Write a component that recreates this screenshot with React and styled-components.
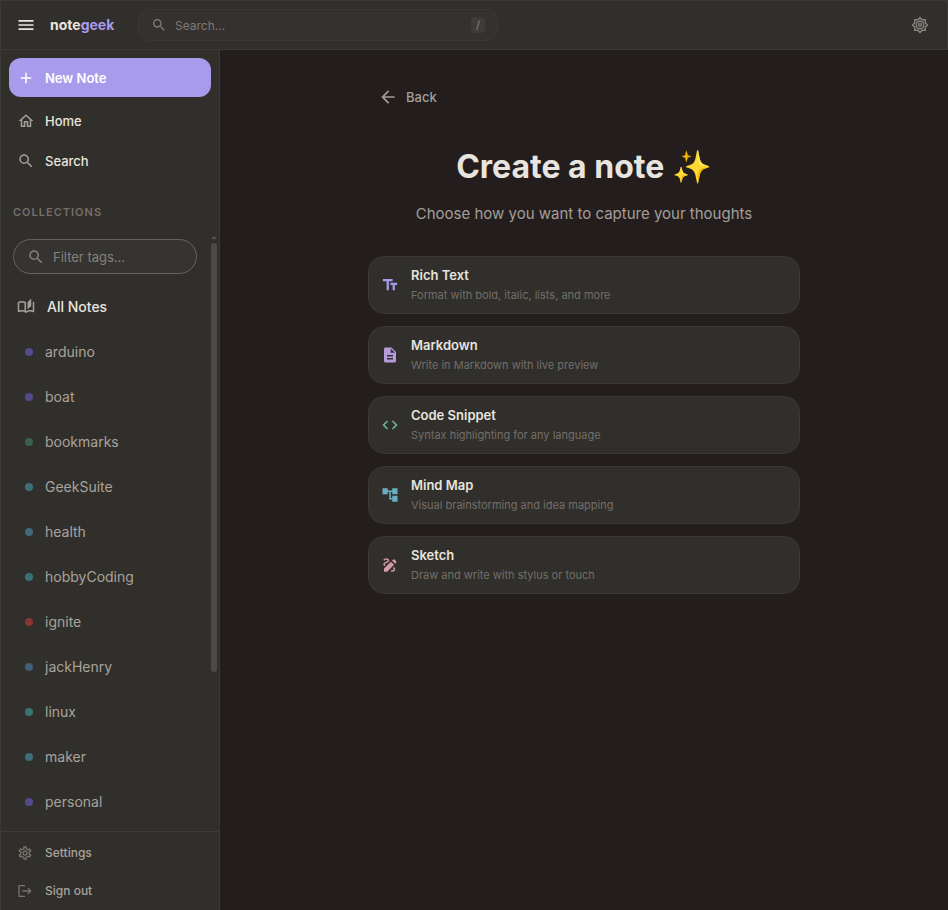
import styled, { createGlobalStyle } from "styled-components";
import {
    MdAccountTree,
    MdAdd,
    MdArrowBack,
    MdCode,
    MdDescription,
    MdDraw,
    MdLogout,
    MdMenu,
    MdOutlineAutoStories,
    MdOutlineHome,
    MdOutlineSettings,
    MdSearch,
    MdTextFields,
} from "react-icons/md";

const TAGS = [
    { name: "arduino", color: "#54498a" },
    { name: "boat", color: "#54498a" },
    { name: "bookmarks", color: "#3b5f4e" },
    { name: "GeekSuite", color: "#3f6e7c" },
    { name: "health", color: "#41697a" },
    { name: "hobbyCoding", color: "#387175" },
    { name: "ignite", color: "#87372f" },
    { name: "jackHenry", color: "#415f77" },
    { name: "linux", color: "#387571" },
    { name: "maker", color: "#3f6b7a" },
    { name: "personal", color: "#54498a" },
];

const NOTE_TYPES = [
    { title: "Rich Text", desc: "Format with bold, italic, lists, and more", icon: MdTextFields, color: "#a99bec" },
    { title: "Markdown", desc: "Write in Markdown with live preview", icon: MdDescription, color: "#b79bdb" },
    { title: "Code Snippet", desc: "Syntax highlighting for any language", icon: MdCode, color: "#74bd9d" },
    { title: "Mind Map", desc: "Visual brainstorming and idea mapping", icon: MdAccountTree, color: "#68afc1" },
    { title: "Sketch", desc: "Draw and write with stylus or touch", icon: MdDraw, color: "#d49ba7" },
];

const ThemeIcon = () => (
    <svg width="18" height="18" viewBox="0 0 24 24" fill="none" stroke="currentColor" strokeWidth="1.8" aria-hidden="true">
        <path d="M19 9.1V5h-4.1L12 2.1 9.1 5H5v4.1L2.1 12 5 14.9V19h4.1l2.9 2.9 2.9-2.9H19v-4.1l2.9-2.9z" />
        <circle cx="12" cy="12" r="5" />
        <circle cx="12" cy="12" r="1.8" />
    </svg>
);

const App = () => {
    return (
        <Shell>
            <GlobalStyle />
            <TopBar>
                <IconButton type="button" aria-label="Toggle menu">
                    <MdMenu size={20} />
                </IconButton>
                <Brand href="#">
                    note<span>geek</span>
                </Brand>
                <SearchBox>
                    <MdSearch size={16} />
                    <SearchInput type="text" placeholder="Search..." aria-label="Search notes" />
                    <Key>/</Key>
                </SearchBox>
                <ThemeButton type="button" aria-label="Change theme">
                    <ThemeIcon />
                </ThemeButton>
            </TopBar>
            <Content>
                <Sidebar>
                    <TopNav>
                        <NewNote type="button">
                            <MdAdd size={18} />
                            New Note
                        </NewNote>
                        <NavLink href="#">
                            <MdOutlineHome size={18} />
                            Home
                        </NavLink>
                        <NavLink href="#">
                            <MdSearch size={18} />
                            Search
                        </NavLink>
                    </TopNav>
                    <SectionTitle>COLLECTIONS</SectionTitle>
                    <Collections>
                        <TagList>
                            <FilterBox>
                                <MdSearch size={18} />
                                <FilterInput type="text" placeholder="Filter tags..." aria-label="Filter tags" />
                            </FilterBox>
                            <AllNotes href="#">
                                <MdOutlineAutoStories size={18} />
                                All Notes
                            </AllNotes>
                            {TAGS.map((tag) => (
                                <TagLink href="#" key={tag.name}>
                                    <Dot $color={tag.color} />
                                    {tag.name}
                                </TagLink>
                            ))}
                        </TagList>
                        <Scrollbar aria-hidden="true">
                            <ScrollArrow />
                            <Thumb />
                        </Scrollbar>
                    </Collections>
                    <Footer>
                        <FooterLink href="#">
                            <MdOutlineSettings size={16} />
                            Settings
                        </FooterLink>
                        <FooterLink href="#">
                            <MdLogout size={16} />
                            Sign out
                        </FooterLink>
                    </Footer>
                </Sidebar>
                <Main>
                    <Picker>
                        <Back type="button">
                            <MdArrowBack size={20} />
                            Back
                        </Back>
                        <Title>Create a note ✨</Title>
                        <SubTitle>Choose how you want to capture your thoughts</SubTitle>
                        <Cards>
                            {NOTE_TYPES.map(({ title, desc, icon: Icon, color }) => (
                                <Card type="button" key={title}>
                                    <Icon size={18} color={color} />
                                    <CardText>
                                        <CardTitle>{title}</CardTitle>
                                        <CardDesc>{desc}</CardDesc>
                                    </CardText>
                                </Card>
                            ))}
                        </Cards>
                    </Picker>
                </Main>
            </Content>
        </Shell>
    );
};

export default App;

const GlobalStyle = createGlobalStyle`
    * {
        box-sizing: border-box;
    }
    body {
        margin: 0;
        background-color: #231e1d;
        font-family: Inter, "Open Sans", sans-serif;
        color: #e8e4df;
    }
    button, input {
        font-family: inherit;
    }
    button {
        cursor: pointer;
    }
    a {
        color: inherit;
        text-decoration: none;
    }
    svg {
        flex-shrink: 0;
    }
`;

const Shell = styled.div`
    display: flex;
    flex-direction: column;
    height: 100vh;
`;
const TopBar = styled.header`
    display: flex;
    flex-shrink: 0;
    align-items: center;
    height: 50px;
    padding: 0 15px;
    background-color: #312f2b;
    border: 1px solid #3b3935;
`;
const IconButton = styled.button`
    display: flex;
    padding: 0;
    border: 0;
    background: none;
    color: #e8e4df;
`;
const ThemeButton = styled(IconButton)`
    margin-left: auto;
    padding: 0 3px;
    color: #8a8580;
`;
const Brand = styled.a`
    width: 88px;
    margin-left: 14px;
    font-size: 14px;
    font-weight: 700;
    line-height: 18px;

    span {
        color: #a99bec;
    }
`;
const SearchBox = styled.div`
    display: flex;
    flex: 0 1 360px;
    align-items: center;
    gap: 8px;
    height: 32px;
    padding: 0 12px;
    border: 1px solid #3a3834;
    border-radius: 12px;
    background-color: #35312e;
    color: #7f7a75;
`;
const SearchInput = styled.input`
    flex: 1;
    min-width: 0;
    padding: 0;
    border: 0;
    outline: 0;
    background: none;
    font-size: 12px;
    color: #e8e4df;

    &::placeholder {
        color: #7f7a75;
    }
`;
const Key = styled.kbd`
    padding: 0 5px;
    border-radius: 4px;
    background-color: #3e3b38;
    font-family: inherit;
    font-size: 11px;
    line-height: 16px;
    color: #8a8580;
`;
const Content = styled.div`
    display: flex;
    flex: 1;
    min-height: 0;
`;
const Sidebar = styled.aside`
    display: flex;
    flex-direction: column;
    flex-shrink: 0;
    width: 220px;
    background-color: #312f2b;
    border: 1px solid #3b3935;
    border-top: 0;
    border-bottom: 0;
`;
const TopNav = styled.nav`
    display: flex;
    flex-direction: column;
    padding: 8px 8px 0;
`;
const NewNote = styled.button`
    display: flex;
    align-items: center;
    gap: 10px;
    height: 39px;
    margin-bottom: 4px;
    padding: 0 8px;
    border: 0;
    border-radius: 12px;
    background-color: #a99bec;
    font-size: 13px;
    font-weight: 600;
    color: #fff;
`;
const NavLink = styled.a`
    display: flex;
    align-items: center;
    gap: 10px;
    height: 40px;
    padding: 0 8px;
    font-size: 13px;
    font-weight: 500;
    color: #e8e4df;

    svg {
        color: #a39e98;
    }
`;
const SectionTitle = styled.h2`
    margin: 0;
    padding: 23px 12px 15px;
    font-size: 11px;
    font-weight: 600;
    line-height: 16px;
    letter-spacing: 1px;
    color: #736e69;
`;
const Collections = styled.div`
    display: flex;
    flex: 1;
    min-height: 0;
`;
const TagList = styled.div`
    flex: 1;
    min-width: 0;
    padding-top: 4px;
    overflow-y: auto;
    scrollbar-width: none;
`;
const FilterBox = styled.div`
    display: flex;
    align-items: center;
    gap: 8px;
    height: 35px;
    margin: 0 12px 10px;
    padding: 0 13px;
    border: 1px solid #66635f;
    border-radius: 18px;
    background-color: #353431;
    color: #85817c;
`;
const FilterInput = styled.input`
    width: 100%;
    padding: 0;
    border: 0;
    outline: 0;
    background: none;
    font-size: 13px;
    color: #e8e4df;

    &::placeholder {
        color: #85817c;
    }
`;
const AllNotes = styled.a`
    display: flex;
    align-items: center;
    gap: 12px;
    height: 45px;
    padding: 0 16px;
    font-size: 14px;
    font-weight: 500;

    svg {
        color: #a39e98;
    }
`;
const TagLink = styled.a`
    display: flex;
    align-items: center;
    gap: 12px;
    height: 45px;
    padding: 0 24px;
    font-size: 14px;
    color: #a8a39d;
`;
const Dot = styled.span`
    width: 8px;
    height: 8px;
    border-radius: 50%;
    background-color: ${({ $color }) => $color};
`;
const Scrollbar = styled.div`
    display: flex;
    flex-direction: column;
    align-items: center;
    gap: 4px;
    width: 10px;
`;
const ScrollArrow = styled.span`
    border: 3px solid transparent;
    border-top-width: 0;
    border-bottom-color: #55534f;
    margin-top: 1px;
`;
const Thumb = styled.span`
    width: 6px;
    height: 72%;
    border-radius: 3px;
    background-color: #4b4a48;
`;
const Footer = styled.nav`
    padding: 2px 0 0;
    border-top: 1px solid #3e3c38;
`;
const FooterLink = styled.a`
    display: flex;
    align-items: center;
    gap: 12px;
    height: 38px;
    padding: 0 16px;
    font-size: 12px;
    font-weight: 500;
    line-height: 16px;
    color: #a8a39d;

    svg {
        color: #77736e;
    }
`;
const Main = styled.main`
    flex: 1;
    min-width: 0;
    padding: 32px 16px;
    overflow-y: auto;
`;
const Picker = styled.div`
    max-width: 432px;
    margin: 0 auto;
`;
const Back = styled.button`
    display: flex;
    align-items: center;
    gap: 8px;
    height: 30px;
    padding: 0 10px;
    border: 0;
    background: none;
    font-size: 13px;
    font-weight: 500;
    color: #a39e98;
`;
const Title = styled.h1`
    margin: 33px 0 0;
    font-size: 32px;
    font-weight: 700;
    line-height: 44px;
    text-align: center;
`;
const SubTitle = styled.p`
    margin: 13px 0 30px;
    font-size: 15px;
    line-height: 24px;
    text-align: center;
    color: #a39e98;
`;
const Cards = styled.div`
    display: flex;
    flex-direction: column;
    gap: 12px;
`;
const Card = styled.button`
    display: flex;
    align-items: center;
    gap: 12px;
    height: 58px;
    padding: 0 12px;
    border: 1px solid #3b3935;
    border-radius: 16px;
    background-color: #312f2b;
    text-align: left;
    color: #e8e4df;
`;
const CardText = styled.span`
    display: flex;
    flex-direction: column;
`;
const CardTitle = styled.span`
    font-size: 13px;
    font-weight: 600;
    line-height: 20px;
`;
const CardDesc = styled.span`
    font-size: 11px;
    line-height: 20px;
    color: #736e69;
`;
